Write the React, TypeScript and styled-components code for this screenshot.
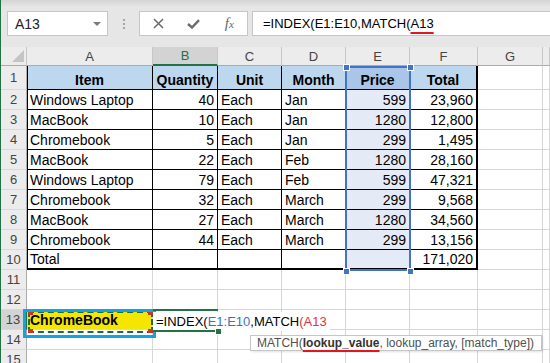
import { Fragment } from "react";
import styled, { createGlobalStyle } from "styled-components";

const GlobalStyle = createGlobalStyle`
  html, body {
    margin: 0;
    padding: 0;
    background: #fff;
  }
  body {
    font-family: "Liberation Sans", Arial, sans-serif;
  }
`;

const GRID = "#d6d6d6";
const GREEN = "#217346";
const SEL_BLUE = "#4472c4";

const columns = ["A", "B", "C", "D", "E", "F", "G", ""];

const headers = ["Item", "Quantity", "Unit", "Month", "Price", "Total"];

const data: (string | number)[][] = [
  ["Windows Laptop", 40, "Each", "Jan", 599, "23,960"],
  ["MacBook", 10, "Each", "Jan", 1280, "12,800"],
  ["Chromebook", 5, "Each", "Jan", 299, "1,495"],
  ["MacBook", 22, "Each", "Feb", 1280, "28,160"],
  ["Windows Laptop", 79, "Each", "Feb", 599, "47,321"],
  ["Chromebook", 32, "Each", "March", 299, "9,568"],
  ["MacBook", 27, "Each", "March", 1280, "34,560"],
  ["Chromebook", 44, "Each", "March", 299, "13,156"],
  ["Total", "", "", "", "", "171,020"],
];

export default function App() {
  const renderCells = (r: number) =>
    columns.map((_, c) => {
      const inTable = r <= 10 && c <= 5;
      if (!inTable) {
        const isA13 = r === 13 && c === 0;
        return (
          <Cell key={c} $bg={isA13 ? "#f4e600" : undefined} $bold={isA13}>
            {isA13 ? "ChromeBook" : ""}
          </Cell>
        );
      }
      let text: string | number = "";
      let align: "left" | "right" | "center" = "left";
      if (r === 1) {
        text = headers[c];
        align = "center";
      } else {
        text = data[r - 2][c];
        align = typeof text === "number" || c === 5 ? "right" : "left";
      }
      const bg =
        r === 1 ? (c === 4 ? "#a9c6e8" : "#bdd7ee") : c === 4 ? "#e4ebf6" : "#fff";
      return (
        <Cell
          key={c}
          $table
          $bg={bg}
          $align={align}
          $bold={r === 1}
          $thickRight={c === 5}
          $thickBottom={r === 10}
          $leftEdge={c === 0}
        >
          {text}
        </Cell>
      );
    });

  return (
    <>
      <GlobalStyle />
      <Window>
        <FormulaBar>
          <NameBox>
            A13
            <Caret />
          </NameBox>
          <Grip>
            <Dot />
            <Dot />
            <Dot />
          </Grip>
          <FnBox>
            <IconSlot>
              <svg width="11" height="11" viewBox="0 0 11 11">
                <path d="M1 1L10 10M10 1L1 10" stroke="#6b6b6b" strokeWidth="1.5" fill="none" />
              </svg>
            </IconSlot>
            <IconSlot>
              <svg width="13" height="10" viewBox="0 0 13 10">
                <polyline points="1,5 5,8.5 12,1.2" stroke="#6b6b6b" strokeWidth="2.4" fill="none" />
              </svg>
            </IconSlot>
            <IconSlot>
              <Fx>
                f<small>x</small>
              </Fx>
            </IconSlot>
          </FnBox>
          <FormulaInput>
            =INDEX(E1:E10,MATCH(<Marked>A13</Marked>
          </FormulaInput>
        </FormulaBar>

        <Sheet>
          <Corner>
            <Triangle />
          </Corner>
          {columns.map((c, i) => (
            <ColHead key={i} $sel={c === "B"}>
              {c}
            </ColHead>
          ))}
          {Array.from({ length: 15 }, (_, i) => {
            const r = i + 1;
            return (
              <Fragment key={r}>
                <RowHead $sel={r === 13}>{r}</RowHead>
                {renderCells(r)}
              </Fragment>
            );
          })}

          <RangeOutline />
          <Handle style={{ left: 342, top: 17 }} />
          <Handle style={{ left: 406, top: 17 }} />
          <Handle style={{ left: 342, top: 221 }} />
          <Handle style={{ left: 406, top: 221 }} />

          <RefBox>
            <RefCorner $v="top" $h="left" />
            <RefCorner $v="top" $h="right" />
            <RefCorner $v="bottom" $h="left" />
            <RefCorner $v="bottom" $h="right" />
          </RefBox>
          <Callout />

          <Editor>
            =INDEX(<RefBlue>E1:E10</RefBlue>,MATCH<RefRed>(A13</RefRed>
          </Editor>

          <Tooltip>
            MATCH(<ArgBold>lookup_value</ArgBold>, lookup_array, [match_type])
          </Tooltip>
        </Sheet>
      </Window>
    </>
  );
}

const Window = styled.div`
  box-sizing: border-box;
  width: 550px;
  height: 363px;
  overflow: hidden;
  border-left: 1px solid ${GREEN};
  display: flex;
  flex-direction: column;
  font-family: "Liberation Sans", Arial, sans-serif;
`;

const FormulaBar = styled.div`
  box-sizing: border-box;
  height: 47px;
  flex: none;
  display: flex;
  align-items: flex-start;
  padding: 11px 0 0 6px;
  background: linear-gradient(#d4d4d4 0px, #e6e6e6 7px, #e6e6e6 100%);
`;

const NameBox = styled.div`
  box-sizing: border-box;
  width: 101px;
  height: 25px;
  display: flex;
  align-items: center;
  justify-content: space-between;
  padding: 0 6px 0 7px;
  background: #fff;
  border: 1px solid #c6c6c6;
  font-size: 14px;
  color: #222;
`;

const Caret = styled.span`
  width: 0;
  height: 0;
  border-left: 4px solid transparent;
  border-right: 4px solid transparent;
  border-top: 4px solid #7a7a7a;
`;

const Grip = styled.div`
  width: 31px;
  height: 25px;
  display: flex;
  flex-direction: column;
  align-items: center;
  justify-content: center;
  gap: 2px;
`;

const Dot = styled.span`
  width: 2px;
  height: 2px;
  background: #a6a6a6;
`;

const FnBox = styled.div`
  box-sizing: border-box;
  width: 109px;
  height: 25px;
  display: flex;
  padding-left: 1px;
  background: #fff;
  border: 1px solid #c6c6c6;
`;

const IconSlot = styled.div`
  width: 36px;
  display: flex;
  align-items: center;
  justify-content: center;
`;

const Fx = styled.span`
  font-family: "Liberation Serif", "Times New Roman", serif;
  font-style: italic;
  font-size: 15px;
  color: #666;
  small {
    font-size: 11px;
  }
`;

const FormulaInput = styled.div`
  box-sizing: border-box;
  flex: 1;
  height: 25px;
  margin-left: 4px;
  padding-left: 10px;
  background: #fff;
  border: 1px solid #c6c6c6;
  border-right: none;
  font-size: 13px;
  line-height: 23px;
  color: #000;
  white-space: nowrap;
`;

const Marked = styled.span`
  text-decoration: underline;
  text-decoration-color: #e8141b;
  text-decoration-thickness: 2px;
  text-underline-offset: 4px;
`;

const Sheet = styled.div`
  position: relative;
  flex: 1;
  display: grid;
  grid-template-columns: 26px 126px 65px 64px 64px 64px 68px 65px 1fr;
  grid-template-rows: 19px 24px repeat(14, 20px);
  font-size: 14px;
`;

const Corner = styled.div`
  box-sizing: border-box;
  display: flex;
  align-items: flex-end;
  justify-content: flex-end;
  padding: 0 2px 3px 0;
  background: #ececec;
  border-right: 1px solid #c6c6c6;
  border-bottom: 1px solid #ababab;
`;

const Triangle = styled.span`
  width: 0;
  height: 0;
  border-left: 12px solid transparent;
  border-bottom: 12px solid #c4c4c4;
`;

const ColHead = styled.div<{ $sel?: boolean }>`
  box-sizing: border-box;
  display: flex;
  align-items: center;
  justify-content: center;
  font-size: 13px;
  color: ${({ $sel }) => ($sel ? GREEN : "#444")};
  background: ${({ $sel }) => ($sel ? "#d3d3d3" : "#ececec")};
  border-right: 1px solid #c6c6c6;
  border-bottom: ${({ $sel }) => ($sel ? `2px solid ${GREEN}` : "1px solid #ababab")};
`;

const RowHead = styled.div<{ $sel?: boolean }>`
  box-sizing: border-box;
  display: flex;
  align-items: center;
  justify-content: center;
  font-size: 13px;
  color: #444;
  background: ${({ $sel }) => ($sel ? "#d3d3d3" : "#ececec")};
  border-right: ${({ $sel }) => ($sel ? `2px solid ${GREEN}` : "1px solid #ababab")};
  border-bottom: 1px solid #d9d9d9;
`;

interface CellProps {
  $bg?: string;
  $align?: "left" | "right" | "center";
  $bold?: boolean;
  $table?: boolean;
  $thickRight?: boolean;
  $thickBottom?: boolean;
  $leftEdge?: boolean;
}

const Cell = styled.div<CellProps>`
  box-sizing: border-box;
  display: flex;
  align-items: flex-end;
  justify-content: ${({ $align }) =>
    $align === "right" ? "flex-end" : $align === "center" ? "center" : "flex-start"};
  padding: 0 3px;
  overflow: hidden;
  white-space: nowrap;
  line-height: 18px;
  color: #000;
  font-weight: ${({ $bold }) => ($bold ? 700 : 400)};
  background: ${({ $bg }) => $bg ?? "#fff"};
  border-right: ${({ $table, $thickRight }) =>
    $thickRight ? "2px solid #000" : $table ? "1px solid #000" : `1px solid ${GRID}`};
  border-bottom: ${({ $table, $thickBottom }) =>
    $thickBottom ? "2px solid #000" : $table ? "1px solid #000" : `1px solid ${GRID}`};
  box-shadow: ${({ $leftEdge }) => ($leftEdge ? "inset 1px 0 0 #000" : "none")};
`;

const RangeOutline = styled.div`
  position: absolute;
  left: 344px;
  top: 19px;
  width: 66px;
  height: 205px;
  box-sizing: border-box;
  border: 2px solid ${SEL_BLUE};
  pointer-events: none;
`;

const Handle = styled.div`
  position: absolute;
  width: 5px;
  height: 5px;
  background: ${SEL_BLUE};
  border: 1px solid #fff;
`;

const RefBox = styled.div`
  position: absolute;
  left: 27px;
  top: 264px;
  width: 125px;
  height: 22px;
  box-sizing: border-box;
  border: 2px dashed #1e6b3e;
`;

const RefCorner = styled.span<{ $v: "top" | "bottom"; $h: "left" | "right" }>`
  position: absolute;
  ${({ $v }) => `${$v}: -2px;`}
  ${({ $h }) => `${$h}: -2px;`}
  width: 5px;
  height: 4px;
  background: #c0392b;
`;

const Callout = styled.div`
  position: absolute;
  left: 22px;
  top: 262px;
  width: 133px;
  height: 29px;
  box-sizing: border-box;
  border: 3px solid #15a2e2;
`;

const Editor = styled.div`
  position: absolute;
  left: 152px;
  top: 265px;
  height: 19px;
  padding: 0 3px 0 3px;
  background: #fff;
  font-size: 13px;
  line-height: 19px;
  white-space: nowrap;
  color: #000;

  &::before {
    content: "";
    position: absolute;
    left: 0;
    top: -3px;
    width: 65px;
    height: 19px;
    border-top: 2px solid ${GREEN};
    border-bottom: 2px solid ${GREEN};
  }

  &::after {
    content: "";
    position: absolute;
    left: 62px;
    top: 16px;
    width: 5px;
    height: 5px;
    background: ${GREEN};
    border: 1px solid #fff;
  }
`;

const RefBlue = styled.span`
  color: #3f6fc4;
`;

const RefRed = styled.span`
  color: #e0353b;
`;

const Tooltip = styled.div`
  position: absolute;
  left: 249px;
  top: 288px;
  height: 16px;
  box-sizing: border-box;
  padding: 0 7px 0 6px;
  background: #fff;
  border: 1px solid #c6c6c6;
  box-shadow: 1px 1px 2px rgba(0, 0, 0, 0.12);
  font-size: 12px;
  line-height: 14px;
  color: #505050;
  white-space: nowrap;
`;

const ArgBold = styled.span`
  font-weight: 700;
  color: #333;
  text-decoration: underline;
  text-decoration-color: #e8141b;
  text-decoration-thickness: 2px;
  text-underline-offset: 3px;
`;
